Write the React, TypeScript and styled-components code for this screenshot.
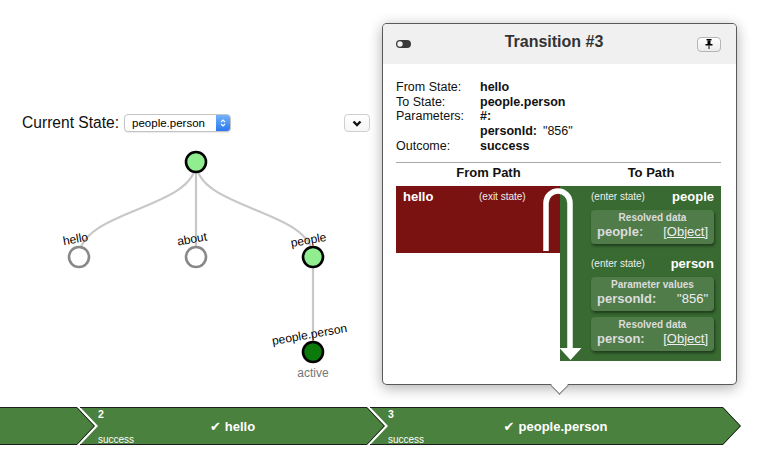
import React from 'react';
import styled, { createGlobalStyle } from 'styled-components';

const GlobalStyle = createGlobalStyle`
  html, body { margin: 0; padding: 0; background: #fff; }
  body { font-family: "Liberation Sans", Arial, Helvetica, sans-serif; color: #000; }
`;

const Page = styled.div`
  width: 757px;
  height: 453px;
  overflow: hidden;
  display: flex;
  flex-direction: column;
`;

const Stage = styled.div`
  position: relative;
  height: 407px;
  flex: none;
  display: flex;
`;

const LeftPanel = styled.div`
  width: 380px;
  padding-top: 113px;
  box-sizing: border-box;
  display: flex;
  flex-direction: column;
`;

const Toolbar = styled.div`
  height: 20px;
  display: flex;
  align-items: center;
  justify-content: space-between;
  padding: 0 10px 0 22px;
`;

const StatePicker = styled.div`
  display: flex;
  align-items: center;
  gap: 5px;
`;

const PickerLabel = styled.span`
  font-size: 15.6px;
  color: #111;
`;

const SelectBox = styled.div`
  box-sizing: border-box;
  width: 107px;
  height: 18px;
  border: 1px solid #c4c4c4;
  border-radius: 4px;
  background: #fff;
  display: flex;
  align-items: center;
  padding-left: 7px;
  font-size: 11.5px;
  box-shadow: 0 1px 1px rgba(0, 0, 0, 0.08);
`;

const SelectText = styled.span`
  flex: 1;
`;

const Stepper = styled.span`
  width: 14px;
  height: 16px;
  background: linear-gradient(#74b3fb, #2a79ee);
  border-radius: 0 3px 3px 0;
  display: flex;
  align-items: center;
  justify-content: center;
`;

const IconButton = styled.div`
  box-sizing: border-box;
  width: 26px;
  height: 18px;
  border: 1px solid #cfcfcf;
  border-radius: 4px;
  background: linear-gradient(#fff, #f6f6f6);
  display: flex;
  align-items: center;
  justify-content: center;
`;

const TreeSvg = styled.svg`
  display: block;
  width: 380px;
  height: 274px;
`;

/* Popover */
const Popover = styled.div`
  position: absolute;
  left: 382px;
  top: 23px;
  width: 355px;
  height: 362px;
  box-sizing: border-box;
  border: 1px solid rgba(0, 0, 0, 0.65);
  border-radius: 5px;
  background: #fff;
  box-shadow: 0 3px 14px rgba(0, 0, 0, 0.32);
  display: flex;
  flex-direction: column;
`;

const PopHeader = styled.div`
  height: 40px;
  flex: none;
  background: #f0f0f0;
  border-radius: 4px 4px 0 0;
  display: flex;
  align-items: center;
  padding: 0 15px 0 13px;
`;

const PopTitle = styled.div`
  flex: 1;
  text-align: center;
  font-weight: bold;
  font-size: 16px;
  color: #333;
  padding-bottom: 4px;
`;

const PinButton = styled.div`
  box-sizing: border-box;
  width: 24px;
  height: 15px;
  border: 1px solid #b5b5b5;
  border-radius: 4px;
  background: linear-gradient(#fff, #ececec);
  display: flex;
  align-items: center;
  justify-content: center;
`;

const PopBody = styled.div`
  padding: 16px 15px 0 13px;
  font-size: 12.5px;
  color: #111;
`;

const InfoGrid = styled.div`
  display: grid;
  grid-template-columns: 84px 1fr;
  line-height: 14.7px;
`;

const InfoValue = styled.span<{ $plain?: boolean }>`
  font-weight: ${(p) => (p.$plain ? 'normal' : 'bold')};
`;

const ParamValue = styled.span`
  margin-left: 6px;
`;

const Rule = styled.hr`
  margin: 8px 0 0;
  border: 0;
  border-top: 1px solid #a8a8a8;
  height: 0;
`;

const PathHeads = styled.div`
  display: grid;
  grid-template-columns: 164px 161px;
  height: 20px;
  line-height: 20px;
  font-weight: bold;
  font-size: 13px;
`;

const PathHead = styled.div`
  text-align: center;
  padding-left: 21px;
`;

const PathArea = styled.div`
  position: relative;
  margin-top: 3px;
  display: grid;
  grid-template-columns: 164px 161px;
  align-items: start;
  color: #fff;
`;

const ExitBlock = styled.div`
  height: 67px;
  box-sizing: border-box;
  background: #7b1212;
  padding: 3px 0 0 7px;
  display: grid;
  grid-template-columns: 76px auto;
  align-items: center;
  align-content: start;
  line-height: 16px;
`;

const StateName = styled.span`
  font-weight: bold;
  font-size: 13px;
`;

const StateNote = styled.span`
  font-size: 10px;
  color: #eee;
`;

const EnterColumn = styled.div`
  box-sizing: border-box;
  background: #386a31;
  padding: 3px 7px 10px 31px;
`;

const EnterBlock = styled.div<{ $gap: number }>`
  margin-top: ${(p) => p.$gap}px;
`;

const StateHead = styled.div`
  height: 15px;
  display: flex;
  align-items: center;
  justify-content: space-between;
`;

const DataCard = styled.div`
  margin-top: 6px;
  box-sizing: border-box;
  height: 34px;
  background: #507c4a;
  border-radius: 4px;
  box-shadow: 1px 2px 3px rgba(0, 0, 0, 0.45);
  padding: 2px 6px 5px 6px;
`;

const CardTitle = styled.div`
  text-align: center;
  font-weight: bold;
  font-size: 10px;
  line-height: 12px;
  color: #dcdcdc;
`;

const CardRow = styled.div`
  display: flex;
  justify-content: space-between;
  font-size: 13px;
  line-height: 15px;
`;

const CardKey = styled.span`
  font-weight: bold;
  color: #dcdcdc;
`;

const CardVal = styled.span<{ $link?: boolean }>`
  color: #eee;
  text-decoration: ${(p) => (p.$link ? 'underline' : 'none')};
`;

const FlowArrow = styled.svg`
  position: absolute;
  left: 0;
  top: 0;
  width: 325px;
  height: 176px;
  pointer-events: none;
`;

const Caret = styled.div`
  position: absolute;
  left: 170px;
  bottom: -8px;
  width: 12px;
  height: 12px;
  background: #fff;
  transform: rotate(45deg);
  border-right: 1px solid #777;
  border-bottom: 1px solid #777;
`;

/* Timeline */
const Timeline = styled.div`
  display: flex;
  height: 38px;
  flex: none;
`;

const Step = styled.div<{ $w: number; $first?: boolean }>`
  position: relative;
  flex: none;
  width: ${(p) => p.$w}px;
  height: 38px;
  margin-left: ${(p) => (p.$first ? 0 : -15)}px;
`;

const StepShape = styled.svg`
  position: absolute;
  left: 0;
  top: 0;
`;

const StepBody = styled.div`
  position: relative;
  box-sizing: border-box;
  height: 100%;
  padding: 1px 18px;
  display: grid;
  grid-template-rows: 12px 1fr 12px;
  color: #fff;
`;

const StepNum = styled.div`
  font-weight: bold;
  font-size: 10.5px;
  line-height: 12px;
`;

const StepLabel = styled.div`
  align-self: center;
  justify-self: center;
  font-weight: bold;
  font-size: 13px;
  line-height: 14px;
`;

const Check = styled.span`
  font-family: "DejaVu Sans", sans-serif;
  font-size: 13px;
  margin-right: 4px;
`;

const StepStatus = styled.div`
  font-size: 10px;
  line-height: 12px;
`;

type TreeNode = {
  x: number;
  y: number;
  kind: 'entered' | 'idle' | 'active';
  label?: string;
  lx?: number;
  ly?: number;
};

const NODES: TreeNode[] = [
  { x: 196, y: 162, kind: 'entered' },
  { x: 79, y: 257, kind: 'idle', label: 'hello', lx: 75.5, ly: 239 },
  { x: 196, y: 257, kind: 'idle', label: 'about', lx: 192, ly: 239 },
  { x: 313, y: 257, kind: 'entered', label: 'people', lx: 308.5, ly: 240 },
  { x: 313, y: 352, kind: 'active', label: 'people.person', lx: 309.5, ly: 334.5 },
];

const EDGES: [number, number][] = [
  [0, 1],
  [0, 2],
  [0, 3],
  [3, 4],
];

const nodeFill = { entered: '#90ee90', idle: '#fff', active: '#0b7a0b' };
const nodeStroke = { entered: '#000', idle: '#888', active: '#000' };

function diagonal(a: TreeNode, b: TreeNode) {
  const my = (a.y + b.y) / 2;
  return `M${a.x},${a.y} C${a.x},${my} ${b.x},${my} ${b.x},${b.y}`;
}

function StateTree() {
  return (
    <TreeSvg viewBox="0 133 380 274">
      {EDGES.map(([a, b]) => (
        <path key={`${a}-${b}`} d={diagonal(NODES[a], NODES[b])} fill="none" stroke="#c8c8c8" strokeWidth={2.2} />
      ))}
      {NODES.map((n, i) => (
        <circle key={i} cx={n.x} cy={n.y} r={10} fill={nodeFill[n.kind]} stroke={nodeStroke[n.kind]} strokeWidth={2.6} />
      ))}
      {NODES.filter((n) => n.label).map((n) => (
        <text
          key={n.label}
          x={n.lx}
          y={(n.ly as number) + 4}
          textAnchor="middle"
          fontSize={12}
          fontFamily="Liberation Sans, Arial, sans-serif"
          fill="#000"
          transform={`rotate(-10 ${n.lx} ${n.ly})`}
        >
          {n.label}
        </text>
      ))}
      <text x={313} y={376.5} textAnchor="middle" fontSize={12} fontFamily="Liberation Sans, Arial, sans-serif" fill="#777">
        active
      </text>
    </TreeSvg>
  );
}

function StepChevron({ w, notch }: { w: number; notch: number }) {
  const d = 18;
  return (
    <StepShape width={w} height={38} viewBox={`0 0 ${w} 38`}>
      <polygon points={`0,0 ${w - d},0 ${w},19 ${w - d},38 0,38 ${notch},19`} fill="#4a813e" />
      <polyline
        points={`0,0.5 ${w - d - 0.2},0.5 ${w - 0.7},19 ${w - d - 0.2},37.5 0,37.5`}
        fill="none"
        stroke="#1e1e1e"
        strokeWidth={1}
      />
    </StepShape>
  );
}

function TimelineStep({ w, first, num, label, status }: { w: number; first?: boolean; num?: string; label?: string; status?: string }) {
  return (
    <Step $w={w} $first={first}>
      <StepChevron w={w} notch={first ? 0 : 18} />
      <StepBody>
        <StepNum>{num}</StepNum>
        <StepLabel>
          {label && (
            <>
              <Check>✔</Check>
              {label}
            </>
          )}
        </StepLabel>
        <StepStatus>{status}</StepStatus>
      </StepBody>
    </Step>
  );
}

export default function App() {
  return (
    <Page>
      <GlobalStyle />
      <Stage>
        <LeftPanel>
          <Toolbar>
            <StatePicker>
              <PickerLabel>Current State:</PickerLabel>
              <SelectBox>
                <SelectText>people.person</SelectText>
                <Stepper>
                  <svg width="6" height="10" viewBox="0 0 6 10">
                    <path d="M1 4 L3 2 L5 4 M1 6 L3 8 L5 6" fill="none" stroke="#fff" strokeWidth="1.1" />
                  </svg>
                </Stepper>
              </SelectBox>
            </StatePicker>
            <IconButton>
              <svg width="10" height="7" viewBox="0 0 10 7">
                <path d="M1.5 1.5 L5 5 L8.5 1.5" fill="none" stroke="#111" strokeWidth="2.4" strokeLinejoin="miter" />
              </svg>
            </IconButton>
          </Toolbar>
          <StateTree />
        </LeftPanel>

        <Popover>
          <PopHeader>
            <svg width="15" height="8" viewBox="0 0 15 8">
              <rect x="0" y="0" width="15" height="8" rx="4" fill="#3a3a3a" />
              <circle cx="4" cy="4" r="2.7" fill="#f4f4f4" />
            </svg>
            <PopTitle>Transition #3</PopTitle>
            <PinButton>
              <svg width="8" height="10" viewBox="0 0 8 10">
                <rect x="1.5" y="0" width="5" height="1.4" fill="#000" />
                <rect x="2.5" y="1.4" width="3" height="3.6" fill="#000" />
                <rect x="0.5" y="5" width="7" height="1.5" fill="#000" />
                <rect x="3.5" y="6.5" width="1" height="3.5" fill="#000" />
              </svg>
            </PinButton>
          </PopHeader>
          <PopBody>
            <InfoGrid>
              <span>From State:</span>
              <InfoValue>hello</InfoValue>
              <span>To State:</span>
              <InfoValue>people.person</InfoValue>
              <span>Parameters:</span>
              <InfoValue>#:</InfoValue>
              <span />
              <span>
                <InfoValue>personId:</InfoValue>
                <ParamValue>"856"</ParamValue>
              </span>
              <span>Outcome:</span>
              <InfoValue>success</InfoValue>
            </InfoGrid>
            <Rule />
            <PathHeads>
              <PathHead>From Path</PathHead>
              <PathHead>To Path</PathHead>
            </PathHeads>
            <PathArea>
              <ExitBlock>
                <StateName>hello</StateName>
                <StateNote>(exit state)</StateNote>
              </ExitBlock>
              <EnterColumn>
                <EnterBlock $gap={0}>
                  <StateHead>
                    <StateNote>(enter state)</StateNote>
                    <StateName>people</StateName>
                  </StateHead>
                  <DataCard>
                    <CardTitle>Resolved data</CardTitle>
                    <CardRow>
                      <CardKey>people:</CardKey>
                      <CardVal $link>[Object]</CardVal>
                    </CardRow>
                  </DataCard>
                </EnterBlock>
                <EnterBlock $gap={12}>
                  <StateHead>
                    <StateNote>(enter state)</StateNote>
                    <StateName>person</StateName>
                  </StateHead>
                  <DataCard>
                    <CardTitle>Parameter values</CardTitle>
                    <CardRow>
                      <CardKey>personId:</CardKey>
                      <CardVal>"856"</CardVal>
                    </CardRow>
                  </DataCard>
                  <DataCard>
                    <CardTitle>Resolved data</CardTitle>
                    <CardRow>
                      <CardKey>person:</CardKey>
                      <CardVal $link>[Object]</CardVal>
                    </CardRow>
                  </DataCard>
                </EnterBlock>
              </EnterColumn>
              <FlowArrow viewBox="0 0 325 176">
                <path d="M150 65 L150 17 A12 12 0 0 1 174 17 L174 163" fill="none" stroke="#fff" strokeWidth="5.5" />
                <polygon points="163.5,162 185.5,162 174.5,174" fill="#fff" />
              </FlowArrow>
            </PathArea>
          </PopBody>
          <Caret />
        </Popover>
      </Stage>

      <Timeline>
        <TimelineStep w={95} first />
        <TimelineStep w={305} num="2" label="hello" status="success" />
        <TimelineStep w={371} num="3" label="people.person" status="success" />
      </Timeline>
    </Page>
  );
}
